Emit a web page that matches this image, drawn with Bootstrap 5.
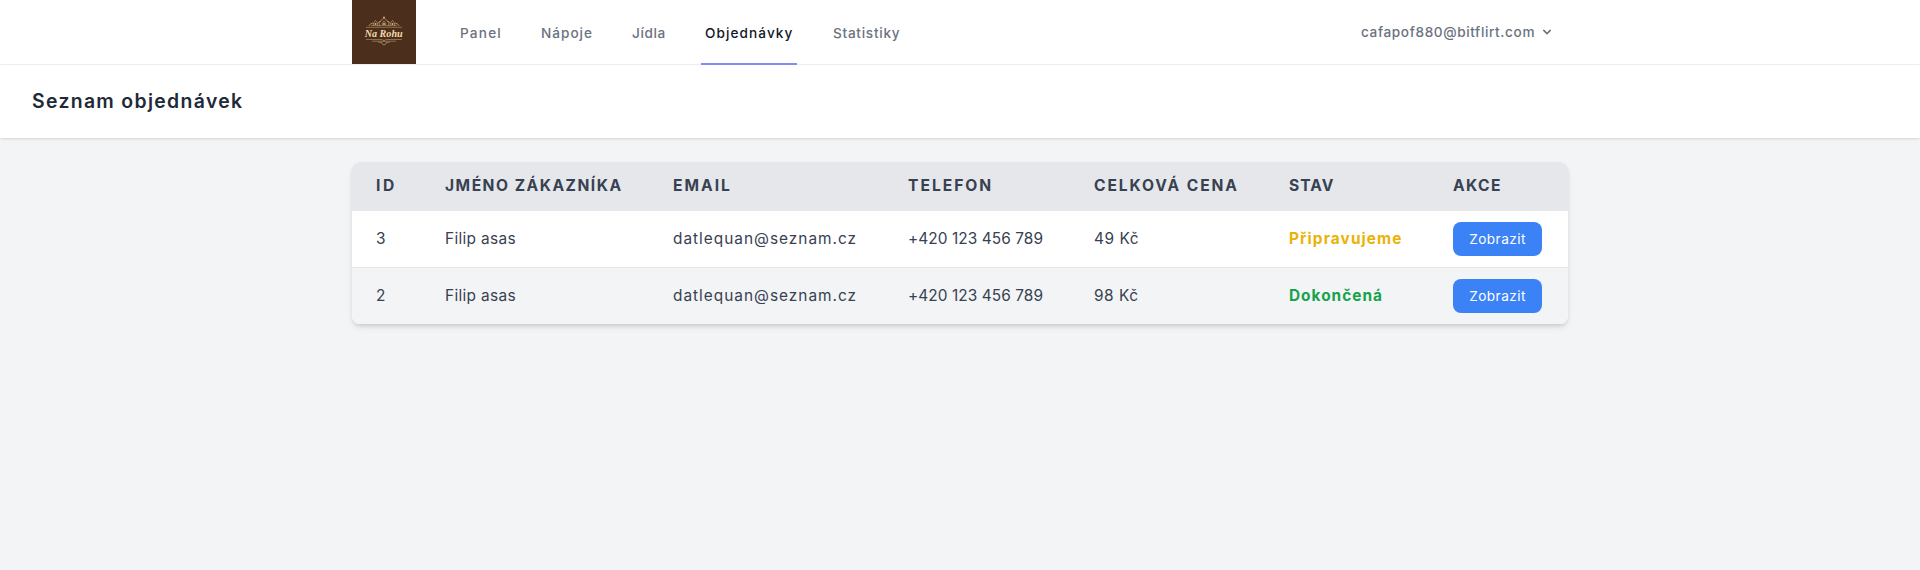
<!DOCTYPE html>
<html lang="cs">
<head>
<meta charset="utf-8">
<meta name="viewport" content="width=device-width, initial-scale=1">
<title>Seznam objednávek</title>
<link rel="stylesheet" href="https://cdn.jsdelivr.net/npm/bootstrap@5.3.0/dist/css/bootstrap.min.css">
<style>
body{font-family:Inter,sans-serif;background:#f3f4f6;color:#374151}
.wrap{width:1216px}
.topbar{height:65px;border-bottom:1px solid #f0f1f3}
.topnav{gap:32px;margin-left:40px}
.topnav .nav-link{height:65px;padding:3px 0 0 4px;border-bottom:2px solid transparent;font-size:13.6px;font-weight:500;color:#6b7280;white-space:nowrap}
.topnav .nav-link.active{border-color:#818cf8;color:#111827}
.l-panel{width:49px;letter-spacing:1.2px}
.l-napoje{width:59px;letter-spacing:1px}
.l-jidla{width:41px;letter-spacing:.6px}
.l-obj{width:96px;letter-spacing:1.08px}
.l-stat{width:75px;letter-spacing:.72px}
.user{height:64px;font-size:13.6px;font-weight:500;color:#6b7280;letter-spacing:.62px;width:207px}
.chev{margin-left:4px}
.page-head{height:73px;padding:1px 32px 0;box-shadow:0 1px 3px rgba(0,0,0,.1),0 1px 2px -1px rgba(0,0,0,.1)}
.page-head h1{font-size:19.4px;font-weight:600;color:#1f2937;letter-spacing:1.33px}
.content{padding:24px 0 48px}
.orders{border-radius:8px;box-shadow:0 4px 6px -1px rgba(0,0,0,.1),0 2px 4px -1px rgba(0,0,0,.1)}
.orders table{table-layout:fixed;line-height:24px;color:#374151}
.orders th{background:#e5e7eb;height:49px;padding:0 0 2px 24px;font-size:15.6px;font-weight:700;white-space:nowrap;vertical-align:middle}
.orders td{height:56px;padding:0 0 0 24px;font-size:15.4px;white-space:nowrap;vertical-align:middle}
.orders tbody tr+tr td{border-top:1px solid #e5e7eb;background:#f3f4f6;height:57px}
.t-mail{letter-spacing:1px}
.t-name{letter-spacing:.33px}
.t-tel{letter-spacing:.08px}
.t-price{letter-spacing:.55px}
.t-wait{color:#eab308;font-weight:700;letter-spacing:1.1px}
.t-done{color:#16a34a;font-weight:700;letter-spacing:1px}
.h-id{letter-spacing:2.5px}
.h-name{letter-spacing:1.5px}
.h-wide{letter-spacing:2px}
.h-price{letter-spacing:1.9px}
.h-state{letter-spacing:1px}
.h-act{letter-spacing:1.4px}
.orders .btn{width:89px;height:34px;background:#3b82f6;color:#fff;border:0;border-radius:8px;padding:1px 0 0;font-size:13.6px;letter-spacing:.45px;display:block}
</style>
</head>
<body class="min-vh-100">
<header class="topbar bg-white">
  <div class="wrap mx-auto d-flex align-items-start">
    <a href="#" class="d-block" aria-label="Na Rohu">
      <svg class="d-block" width="64" height="64" viewBox="0 0 64 64">
        <rect width="64" height="64" fill="#4b2e1c"/>
        <g fill="none" stroke="#b99a70" stroke-width=".8">
          <path d="M14 27.3h36M19 25.6h26M14 39.5h15q3 0 3 2 0-2 3-2h15M20 41.2h24" opacity=".75"/>
          <path d="M28 26c-2-4 1-5 4-8 3 3 6 4 4 8M30.500 25c-1-2 1-3 1.500-4 .5 1 2.500 2 1.500 4M21.500 26c-1-3 1-4 2-5.500 1 1.500 3 2.500 2 5.500M38.500 26c-1-3 1-4 2-5.500 1 1.500 3 2.500 2 5.500M17 26q1-3 4-3M47 26q-1-3-4-3M26 23q1-2 3-2M38 23q-1-2-3-2"/>
          <path d="M26 41.500q1.500 2 3.500.5 0 2.500 2.500 3 2.500-.5 2.500-3 2 1.500 3.500-.5" opacity=".9"/>
        </g>
        <g fill="#d3b78b"><circle cx="32" cy="17.500" r=".9"/><circle cx="23.500" cy="24" r="1"/><circle cx="40.500" cy="24" r="1"/><circle cx="32" cy="24" r="1"/></g>
        <text x="12.700" y="37" textLength="38" lengthAdjust="spacingAndGlyphs" font-family="Liberation Serif,serif" font-size="10.500" font-style="italic" font-weight="700" fill="#f3dcae">Na Rohu</text>
      </svg>
    </a>
    <nav class="nav topnav flex-nowrap">
      <a class="nav-link d-flex align-items-center l-panel" href="#">Panel</a>
      <a class="nav-link d-flex align-items-center l-napoje" href="#">Nápoje</a>
      <a class="nav-link d-flex align-items-center l-jidla" href="#">Jídla</a>
      <a class="nav-link d-flex align-items-center l-obj active" href="#">Objednávky</a>
      <a class="nav-link d-flex align-items-center l-stat" href="#">Statistiky</a>
    </nav>
    <div class="user ms-auto d-flex align-items-center" role="button">
      <span>cafapof880@bitflirt.com</span>
      <svg class="chev" width="16" height="16" viewBox="0 0 20 20" fill="#6b7280"><path fill-rule="evenodd" d="M5.293 7.293a1 1 0 011.414 0L10 10.586l3.293-3.293a1 1 0 111.414 1.414l-4 4a1 1 0 01-1.414 0l-4-4a1 1 0 010-1.414z"/></svg>
    </div>
  </div>
</header>
<div class="page-head bg-white d-flex align-items-center"><h1 class="mb-0">Seznam objednávek</h1></div>
<main class="wrap content mx-auto">
  <div class="orders bg-white overflow-hidden">
    <table class="w-100">
      <colgroup><col style="width:69px"><col style="width:228px"><col style="width:235px"><col style="width:186px"><col style="width:195px"><col style="width:164px"><col style="width:139px"></colgroup>
      <thead>
        <tr>
          <th class="h-id">ID</th>
          <th class="h-name">JMÉNO ZÁKAZNÍKA</th>
          <th class="h-wide">EMAIL</th>
          <th class="h-wide">TELEFON</th>
          <th class="h-price">CELKOVÁ CENA</th>
          <th class="h-state">STAV</th>
          <th class="h-act">AKCE</th>
        </tr>
      </thead>
      <tbody>
        <tr>
          <td>3</td><td class="t-name">Filip asas</td><td class="t-mail">datlequan@seznam.cz</td><td class="t-tel">+420 123 456 789</td><td class="t-price">49 Kč</td><td class="t-wait">Připravujeme</td>
          <td><button class="btn" type="button">Zobrazit</button></td>
        </tr>
        <tr>
          <td>2</td><td class="t-name">Filip asas</td><td class="t-mail">datlequan@seznam.cz</td><td class="t-tel">+420 123 456 789</td><td class="t-price">98 Kč</td><td class="t-done">Dokončená</td>
          <td><button class="btn" type="button">Zobrazit</button></td>
        </tr>
      </tbody>
    </table>
  </div>
</main>
<script src="https://cdn.jsdelivr.net/npm/bootstrap@5.3.0/dist/js/bootstrap.bundle.min.js"></script>
</body>
</html>
